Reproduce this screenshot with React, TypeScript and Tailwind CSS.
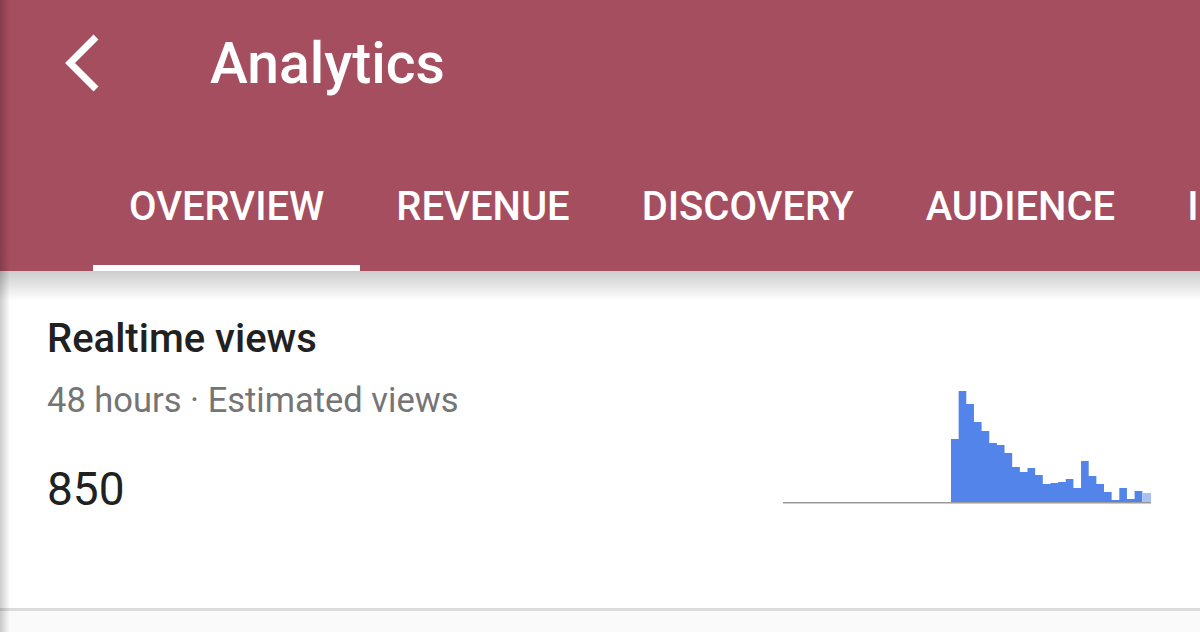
import React from "react";

const tops = [439, 391, 404, 422, 431, 443, 445, 453, 467, 472, 468, 475, 484, 483, 482, 479, 488, 461, 476, 484, 492, 500, 488, 499, 491];
const lightTop = 493;

function Chart() {
  const ox = 783;
  const oy = 385;
  const x0 = 951;
  const bw = 7.65;
  const base = 502;
  let d = `M${x0 - ox},${base - oy}`;
  tops.forEach((t, i) => {
    const xa = x0 + i * bw - ox;
    const xb = x0 + (i + 1) * bw - ox;
    d += ` L${xa},${t - oy} L${xb},${t - oy}`;
  });
  const lastX = x0 + tops.length * bw - ox;
  d += ` L${lastX},${base - oy} Z`;
  return (
    <svg width="368" height="119" viewBox="0 0 368 119" className="block">
      <path d={d} fill="#5284ea" />
      <rect x={lastX} y={lightTop - oy} width={368 - lastX} height={base - lightTop} fill="#a9c1f1" />
      <rect x="0" y={base - oy} width="368" height="1.5" fill="#9a9a9a" />
    </svg>
  );
}

const tabs = ["OVERVIEW", "REVENUE", "DISCOVERY", "AUDIENCE", "INTERACTIVE"];

export default function App() {
  return (
    <div
      className="relative w-[1200px] h-[632px] overflow-hidden bg-[#fafafa]"
      style={{ fontFamily: "Roboto, 'Noto Sans', sans-serif" }}
    >
      <div className="bg-[#a54e5f]">
        <div className="h-[126px] flex items-center">
          <div className="w-[210px] flex items-center pl-[58px]">
            <svg width="44" height="64" viewBox="0 0 44 64">
              <path d="M38,6 L12,32 L38,58" fill="none" stroke="#ffffff" strokeWidth="7" strokeLinejoin="miter" />
            </svg>
          </div>
          <div className="text-white text-[57px] font-medium leading-none">Analytics</div>
        </div>
        <div className="h-[145px] flex items-end pl-[93px] whitespace-nowrap">
          {tabs.map((t, i) => (
            <div
              key={t}
              className={`px-[36px] pb-[38px] text-[40px] leading-[40px] text-white font-medium border-b-[6px] ${i === 0 ? "border-white" : "border-transparent"}`}
            >
              {t}
            </div>
          ))}
        </div>
      </div>
      <div className="relative bg-white h-[340px] border-b-[3px] border-[#dcdcdc]">
        <div className="absolute left-0 right-0 top-0 h-[30px] bg-gradient-to-b from-black/20 to-transparent pointer-events-none" />
        <div className="flex justify-between pl-[47px] pr-[49px]">
          <div className="pt-[44px]">
            <div className="text-[40px] leading-[48px] font-medium text-[#212121]">Realtime views</div>
            <div className="mt-[17px] text-[34.5px] leading-[40px] text-[#757575]">48 hours · Estimated views</div>
            <div className="mt-[43px] text-[46px] leading-[52px] text-[#212121]">850</div>
          </div>
          <div className="pt-[114px]">
            <Chart />
          </div>
        </div>
      </div>
      <div className="absolute inset-y-0 left-0 w-[10px] bg-gradient-to-r from-black/20 to-transparent pointer-events-none" />
    </div>
  );
}
